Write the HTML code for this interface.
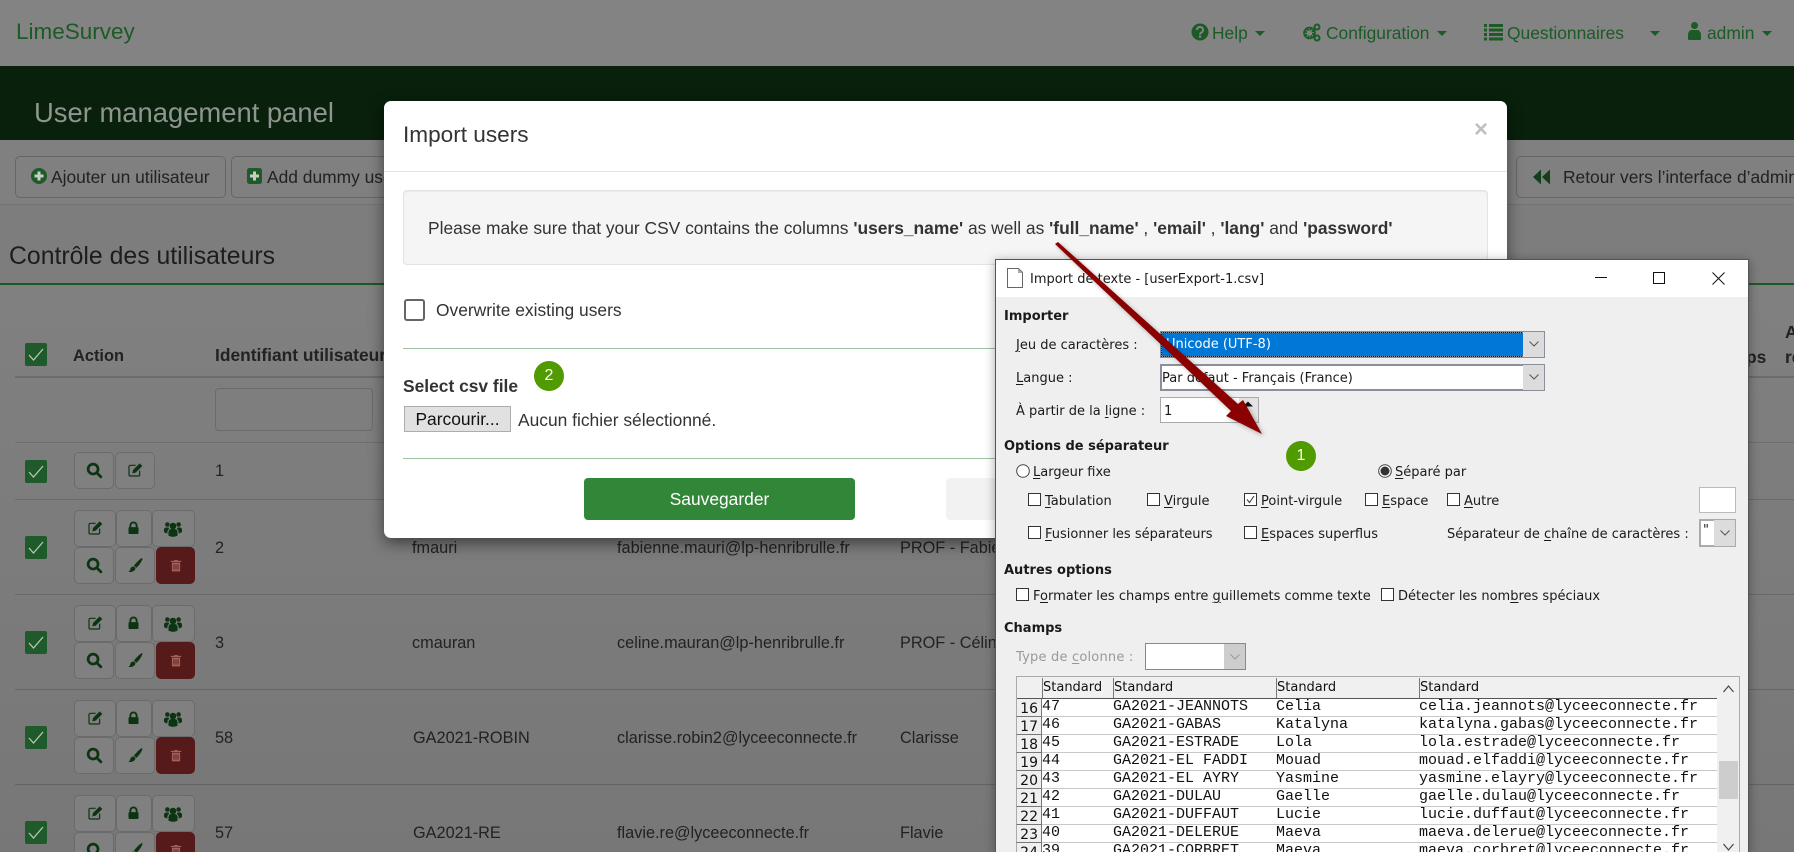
<!DOCTYPE html>
<html><head><meta charset="utf-8"><title>User management panel</title>
<style>
html,body{margin:0;padding:0;width:1794px;height:852px;overflow:hidden;background:#7d7d7d}
body{position:relative;font-family:"Liberation Sans",Arial,sans-serif;font-size:17.400px;color:#222}
.a,.t,svg.i{position:absolute}
.t{white-space:nowrap;line-height:20px;height:20px}
.nav{color:#1c5a26}
.b{font-weight:700}
.tb{position:absolute;box-sizing:border-box;height:42px;top:156px;border:1px solid #666;border-radius:5px}
.ab{position:absolute;box-sizing:border-box;height:37px;border:1px solid #6b6b6b;border-radius:5px;background:#808080}
.ck{position:absolute;width:22px;height:23px;background:#1f5a2a;border-radius:2px}
.ck svg{position:absolute;left:3px;top:4px}
.cell{color:#222;font-size:16.300px}
.d{font-family:"DejaVu Sans",sans-serif;font-size:13px;color:#1a1a1a}
.d .u,.u{text-decoration:underline;text-underline-offset:2px}
.bx{position:absolute;box-sizing:border-box;width:13px;height:13px;border:1px solid #333;background:#fff}
.m{font-family:"Liberation Mono",monospace;font-size:15px;color:#111;line-height:18px;height:18px;position:absolute;white-space:pre}
.rh{position:absolute;left:1016px;width:26px;height:18px;box-sizing:border-box;border-bottom:1px solid #777;border-right:1px solid #777;border-left:1px solid #aaa;background:#efefef;font-family:"DejaVu Sans",sans-serif;font-size:14px;line-height:21px;text-align:right;padding-right:3px;color:#111;overflow:hidden}
.rw{position:absolute;left:1042px;width:675px;height:18px;box-sizing:border-box;border-bottom:1px solid #c8c8c8;background:#fff}
.sd{position:absolute;top:678px;height:20px;font-family:"DejaVu Sans",sans-serif;font-size:13px;line-height:20px;color:#111;box-sizing:border-box;border-left:1px solid #777}
</style></head><body>
<svg width="0" height="0" style="position:absolute">
<defs>
<symbol id="search" viewBox="0 0 24 24"><circle cx="10" cy="10" r="7" fill="none" stroke="currentColor" stroke-width="3.800"/><path d="M15 15l6 6" stroke="currentColor" stroke-width="3.800" stroke-linecap="round"/></symbol>
<symbol id="edit" viewBox="0 0 24 24"><path d="M13 5H5a2 2 0 0 0-2 2v12a2 2 0 0 0 2 2h12a2 2 0 0 0 2-2v-6" fill="none" stroke="currentColor" stroke-width="1.800"/><path d="M9 12L19 2l4 4-10 10-5 1z" fill="currentColor"/></symbol>
<symbol id="lock" viewBox="0 0 24 24"><path d="M7 11V8a5 5 0 0 1 10 0v3" fill="none" stroke="currentColor" stroke-width="3"/><rect x="4" y="10.500" width="16" height="11" rx="1.500" fill="currentColor"/></symbol>
<symbol id="users" viewBox="0 0 24 24"><circle cx="12" cy="8" r="4.400" fill="currentColor"/><circle cx="4.500" cy="6" r="3" fill="currentColor"/><circle cx="19.500" cy="6" r="3" fill="currentColor"/><path d="M6 21v-5a4 4 0 0 1 4-4h4a4 4 0 0 1 4 4v5a14 14 0 0 1-12 0z" fill="currentColor"/><path d="M0 16v-3a3 3 0 0 1 3-3h3l1 2a5 5 0 0 0-2.500 4v2a9 9 0 0 1-4.500-2zM24 16v-3a3 3 0 0 0-3-3h-3l-1 2a5 5 0 0 1 2.500 4v2a9 9 0 0 0 4.500-2z" fill="currentColor"/></symbol>
<symbol id="brush" viewBox="0 0 24 24"><path d="M22 1c1 0 1.500 1 1 2-2 5-5 9-9 12.500L10.500 12C14 8 18 3 22 1z" fill="currentColor"/><path d="M9 13.500c2-.5 4 1.500 3.500 3.500-1 3.500-5.500 5.500-10.500 4.500 2-1 2.500-2.500 3-4.500.5-2 2-3 4-3.500z" fill="currentColor"/></symbol>
<symbol id="trash" viewBox="0 0 24 24"><path d="M9 4V2.500h6V4h6v2H3V4zM5 7h14v15H5z" fill="currentColor"/><path d="M8.500 10v9M12 10v9M15.500 10v9" stroke="#561a1a" stroke-width="1.500"/></symbol>
<symbol id="chk" viewBox="0 0 16 15"><path d="M1 8l4.500 5L15 2" fill="none" stroke="#b8c6ba" stroke-width="1.300"/></symbol>
</defs></svg>

<!-- navbar -->
<div class="a" style="left:0;top:0;width:1794px;height:66px;background:#838383"></div>
<div class="t nav" style="left:16px;top:22px;font-size:22.500px">LimeSurvey</div>
<svg class="i" style="left:1191px;top:22px;color:#1c5a26" width="18" height="20" viewBox="0 0 18 20"><circle cx="9" cy="10" r="8.500" fill="currentColor"/><path d="M6 8a3 3 0 1 1 4.500 2.500c-1 .6-1.500 1-1.500 2" fill="none" stroke="#838383" stroke-width="2"/><rect x="8" y="13.500" width="2.200" height="2.200" fill="#838383"/></svg>
<div class="t nav" style="left:1212px;top:23px">Help</div>
<div class="a" style="left:1255px;top:31px;border:5px solid transparent;border-top-color:#1c5a26;border-bottom:0"></div>
<svg class="i" style="left:1302px;top:22px;color:#1c5a26" width="19" height="20" viewBox="0 0 19 20"><circle cx="7.500" cy="11" r="4.500" fill="none" stroke="currentColor" stroke-width="3.500" stroke-dasharray="2.500 1"/><circle cx="7.500" cy="11" r="5.500" fill="none" stroke="currentColor" stroke-width="1.500"/><circle cx="15" cy="5" r="2.500" fill="none" stroke="currentColor" stroke-width="2"/><circle cx="15" cy="16" r="2.500" fill="none" stroke="currentColor" stroke-width="2"/></svg>
<div class="t nav" style="left:1326px;top:23px">Configuration</div>
<div class="a" style="left:1437px;top:31px;border:5px solid transparent;border-top-color:#1c5a26;border-bottom:0"></div>
<svg class="i" style="left:1484px;top:23px;color:#1c5a26" width="19" height="18" viewBox="0 0 19 18"><path d="M0 1h3v3H0zM5 1h14v3H5zM0 5.500h3v3H0zM5 5.500h14v3H5zM0 10h3v3H0zM5 10h14v3H5zM0 14.500h3v3H0zM5 14.500h14v3H5z" fill="currentColor"/></svg>
<div class="t nav" style="left:1507px;top:23px">Questionnaires</div>
<div class="a" style="left:1650px;top:31px;border:5px solid transparent;border-top-color:#1c5a26;border-bottom:0"></div>
<svg class="i" style="left:1688px;top:22px;color:#1c5a26" width="13" height="18" viewBox="0 0 13 18"><circle cx="6.500" cy="3.500" r="3.500" fill="currentColor"/><path d="M1 18a1 1 0 0 1-1-1v-4c0-3 2-5 3.500-5h6c1.500 0 3.500 2 3.500 5v4a1 1 0 0 1-1 1z" fill="currentColor"/></svg>
<div class="t nav" style="left:1707px;top:23px">admin</div>
<div class="a" style="left:1762px;top:31px;border:5px solid transparent;border-top-color:#1c5a26;border-bottom:0"></div>

<!-- header -->
<div class="a" style="left:0;top:66px;width:1794px;height:74px;background:#08200c"></div>
<div class="t" style="left:34px;top:103px;font-size:27.400px;color:#8f968f">User management panel</div>

<!-- toolbar -->
<div class="a" style="left:0;top:140px;width:1794px;height:64px;background:#808080;border-bottom:1px solid #747474"></div>
<div class="tb" style="left:15px;width:211px"></div>
<div class="tb" style="left:231px;width:180px"></div>
<div class="tb" style="left:1516px;width:290px"></div>
<svg class="i" style="left:31px;top:168px" width="16" height="16" viewBox="0 0 16 16"><circle cx="8" cy="8" r="8" fill="#1f5a28"/><path d="M3.500 6.500h3v-3h3v3h3v3h-3v3h-3v-3h-3z" fill="#c3cfc5"/></svg>
<div class="t" style="left:51px;top:167px">Ajouter un utilisateur</div>
<svg class="i" style="left:247px;top:168px" width="15" height="16" viewBox="0 0 15 16"><rect width="15" height="16" rx="2.500" fill="#1f5a28"/><path d="M3 6.500h3v-3h3v3h3v3H9v3H6v-3H3z" fill="#c3cfc5"/></svg>
<div class="t" style="left:267px;top:167px">Add dummy user</div>
<svg class="i" style="left:1533px;top:169px" width="17" height="16" viewBox="0 0 17 16"><path d="M0 8l8-7.500v15zM9 8l8-7.500v15z" fill="#143f1c"/></svg>
<div class="t" style="left:1563px;top:167px">Retour vers l’interface d’administration</div>

<!-- heading -->
<div class="t" style="left:9px;top:247px;font-size:24.800px;color:#1d1d1d">Contrôle des utilisateurs</div>
<div class="a" style="left:0;top:283px;width:1794px;height:2px;background:#1b5a22"></div>

<!-- table bg -->
<div class="a" style="left:0;top:285px;width:1794px;height:567px;background:linear-gradient(#808080,#777)"></div>
<div class="ck" style="left:25px;top:343px"><svg width="16" height="15"><use href="#chk"/></svg></div>
<div class="t b" style="left:73px;top:346px;font-size:16.400px">Action</div>
<div class="t b" style="left:215px;top:345px">Identifiant utilisateur</div>
<div class="t b" style="left:1746px;top:347px">ps</div>
<div class="t b" style="left:1785px;top:322px">Accès</div>
<div class="t b" style="left:1785px;top:347px">restreint</div>
<div class="a" style="left:15px;top:376px;width:1779px;height:2px;background:#6c6c6c"></div>
<div class="a" style="left:215px;top:388px;width:158px;height:43px;box-sizing:border-box;border:1px solid #6b6b6b;border-radius:4px"></div>
<div class="a" style="left:15px;top:442px;width:1779px;height:1px;background:#6e6e6e"></div>
<div class="a" style="left:15px;top:499px;width:1779px;height:1px;background:#6b6b6b"></div>
<div class="a" style="left:15px;top:594px;width:1779px;height:1px;background:#686868"></div>
<div class="a" style="left:15px;top:689px;width:1779px;height:1px;background:#656565"></div>
<div class="a" style="left:15px;top:784px;width:1779px;height:1px;background:#636363"></div>

<!-- row 1 -->
<div class="ck" style="left:25px;top:460px"><svg width="16" height="15"><use href="#chk"/></svg></div>
<div class="ab" style="left:74px;top:452px;width:40px"></div><svg class="i" style="left:86px;top:462px;color:#0c3412" width="17" height="17"><use href="#search"/></svg>
<div class="ab" style="left:115px;top:452px;width:40px"></div><svg class="i" style="left:127px;top:462px;color:#0c3412" width="16" height="16"><use href="#edit"/></svg>
<div class="t cell" style="left:215px;top:461px">1</div>

<!-- row 2 -->
<div class="ck" style="left:25px;top:536px"><svg width="16" height="15"><use href="#chk"/></svg></div>
<div class="ab" style="left:74px;top:510px;width:42px"></div><svg class="i" style="left:87px;top:520px;color:#0c3412" width="16" height="16"><use href="#edit"/></svg>
<div class="ab" style="left:116px;top:510px;width:36px"></div><svg class="i" style="left:126px;top:520px;color:#0c3412" width="15" height="16"><use href="#lock"/></svg>
<div class="ab" style="left:152px;top:510px;width:43px"></div><svg class="i" style="left:164px;top:520px;color:#0c3412" width="18" height="18"><use href="#users"/></svg>
<div class="ab" style="left:74px;top:547px;width:40px"></div><svg class="i" style="left:86px;top:557px;color:#0c3412" width="17" height="17"><use href="#search"/></svg>
<div class="ab" style="left:115px;top:547px;width:40px"></div><svg class="i" style="left:127px;top:557px;color:#0c3412" width="16" height="17"><use href="#brush"/></svg>
<div class="ab" style="left:156px;top:547px;width:39px;background:#561a1a;border-color:#561a1a"></div><svg class="i" style="left:169px;top:558px;color:#a5605a" width="14" height="15"><use href="#trash"/></svg>
<div class="t cell" style="left:215px;top:538px">2</div>
<div class="t cell" style="left:412px;top:538px">fmauri</div>
<div class="t cell" style="left:617px;top:538px">fabienne.mauri@lp-henribrulle.fr</div>
<div class="t cell" style="left:900px;top:538px">PROF - Fabienne</div>

<!-- row 3 -->
<div class="ck" style="left:25px;top:631px"><svg width="16" height="15"><use href="#chk"/></svg></div>
<div class="ab" style="left:74px;top:605px;width:42px"></div><svg class="i" style="left:87px;top:615px;color:#0c3412" width="16" height="16"><use href="#edit"/></svg>
<div class="ab" style="left:116px;top:605px;width:36px"></div><svg class="i" style="left:126px;top:615px;color:#0c3412" width="15" height="16"><use href="#lock"/></svg>
<div class="ab" style="left:152px;top:605px;width:43px"></div><svg class="i" style="left:164px;top:615px;color:#0c3412" width="18" height="18"><use href="#users"/></svg>
<div class="ab" style="left:74px;top:642px;width:40px"></div><svg class="i" style="left:86px;top:652px;color:#0c3412" width="17" height="17"><use href="#search"/></svg>
<div class="ab" style="left:115px;top:642px;width:40px"></div><svg class="i" style="left:127px;top:652px;color:#0c3412" width="16" height="17"><use href="#brush"/></svg>
<div class="ab" style="left:156px;top:642px;width:39px;background:#561a1a;border-color:#561a1a"></div><svg class="i" style="left:169px;top:653px;color:#a5605a" width="14" height="15"><use href="#trash"/></svg>
<div class="t cell" style="left:215px;top:633px">3</div>
<div class="t cell" style="left:412px;top:633px">cmauran</div>
<div class="t cell" style="left:617px;top:633px">celine.mauran@lp-henribrulle.fr</div>
<div class="t cell" style="left:900px;top:633px">PROF - Céline</div>

<!-- row 4 -->
<div class="ck" style="left:25px;top:726px"><svg width="16" height="15"><use href="#chk"/></svg></div>
<div class="ab" style="left:74px;top:700px;width:42px"></div><svg class="i" style="left:87px;top:710px;color:#0c3412" width="16" height="16"><use href="#edit"/></svg>
<div class="ab" style="left:116px;top:700px;width:36px"></div><svg class="i" style="left:126px;top:710px;color:#0c3412" width="15" height="16"><use href="#lock"/></svg>
<div class="ab" style="left:152px;top:700px;width:43px"></div><svg class="i" style="left:164px;top:710px;color:#0c3412" width="18" height="18"><use href="#users"/></svg>
<div class="ab" style="left:74px;top:737px;width:40px"></div><svg class="i" style="left:86px;top:747px;color:#0c3412" width="17" height="17"><use href="#search"/></svg>
<div class="ab" style="left:115px;top:737px;width:40px"></div><svg class="i" style="left:127px;top:747px;color:#0c3412" width="16" height="17"><use href="#brush"/></svg>
<div class="ab" style="left:156px;top:737px;width:39px;background:#561a1a;border-color:#561a1a"></div><svg class="i" style="left:169px;top:748px;color:#a5605a" width="14" height="15"><use href="#trash"/></svg>
<div class="t cell" style="left:215px;top:728px">58</div>
<div class="t cell" style="left:413px;top:728px">GA2021-ROBIN</div>
<div class="t cell" style="left:617px;top:728px">clarisse.robin2@lyceeconnecte.fr</div>
<div class="t cell" style="left:900px;top:728px">Clarisse</div>

<!-- row 5 -->
<div class="ck" style="left:25px;top:821px"><svg width="16" height="15"><use href="#chk"/></svg></div>
<div class="ab" style="left:74px;top:795px;width:42px"></div><svg class="i" style="left:87px;top:805px;color:#0c3412" width="16" height="16"><use href="#edit"/></svg>
<div class="ab" style="left:116px;top:795px;width:36px"></div><svg class="i" style="left:126px;top:805px;color:#0c3412" width="15" height="16"><use href="#lock"/></svg>
<div class="ab" style="left:152px;top:795px;width:43px"></div><svg class="i" style="left:164px;top:805px;color:#0c3412" width="18" height="18"><use href="#users"/></svg>
<div class="ab" style="left:74px;top:832px;width:40px"></div><svg class="i" style="left:86px;top:842px;color:#0c3412" width="17" height="17"><use href="#search"/></svg>
<div class="ab" style="left:115px;top:832px;width:40px"></div><svg class="i" style="left:127px;top:842px;color:#0c3412" width="16" height="17"><use href="#brush"/></svg>
<div class="ab" style="left:156px;top:832px;width:39px;background:#561a1a;border-color:#561a1a"></div><svg class="i" style="left:169px;top:843px;color:#a5605a" width="14" height="15"><use href="#trash"/></svg>
<div class="t cell" style="left:215px;top:823px">57</div>
<div class="t cell" style="left:413px;top:823px">GA2021-RE</div>
<div class="t cell" style="left:617px;top:823px">flavie.re@lyceeconnecte.fr</div>
<div class="t cell" style="left:900px;top:823px">Flavie</div>

<!-- modal -->
<div class="a" style="left:384px;top:101px;width:1123px;height:437px;background:#fff;border-radius:7px;box-shadow:0 5px 15px rgba(0,0,0,.5)"></div>
<div class="t" style="left:403px;top:125px;font-size:22.600px;color:#333">Import users</div>
<div class="t b" style="left:1474px;top:120px;font-size:24px;color:#c0c0c0">×</div>
<div class="a" style="left:384px;top:171px;width:1123px;height:1px;background:#e5e5e5"></div>
<div class="a" style="left:403px;top:190px;width:1085px;height:75px;box-sizing:border-box;background:#f5f5f5;border:1px solid #e3e3e3;border-radius:4px;box-shadow:inset 0 1px 1px rgba(0,0,0,.05)"></div>
<div class="t" style="left:428px;top:218px;color:#333">Please make sure that your CSV contains the columns <b>'users_name'</b> as well as <b>'full_name'</b> , <b>'email'</b> , <b>'lang'</b> and <b>'password'</b></div>
<div class="a" style="left:404px;top:299px;width:21px;height:22px;box-sizing:border-box;border:2px solid #666;border-radius:3px"></div>
<div class="t" style="left:436px;top:300px;color:#333">Overwrite existing users</div>
<div class="a" style="left:403px;top:348px;width:1085px;height:1px;background:#9fc2a1"></div>
<div class="t b" style="left:403px;top:376px;color:#333">Select csv file</div>
<div class="a" style="left:534px;top:361px;width:30px;height:30px;border-radius:50%;background:#4f9b00;color:#fff;text-align:center;line-height:30px;font-size:16px">2</div>
<div class="a" style="left:404px;top:406px;width:107px;height:26px;box-sizing:border-box;background:#e1e1e1;border:1px solid #adadad;text-align:center;line-height:25px;color:#111">Parcourir...</div>
<div class="t" style="left:518px;top:410px;color:#333">Aucun fichier sélectionné.</div>
<div class="a" style="left:403px;top:458px;width:1085px;height:1px;background:#9fc2a1"></div>
<div class="a" style="left:584px;top:478px;width:271px;height:42px;background:#328637;border-radius:4px;color:#fff;text-align:center;line-height:43px">Sauvegarder</div>
<div class="a" style="left:946px;top:478px;width:271px;height:42px;background:#f2f2f2;border-radius:4px"></div>

<!-- dialog -->
<div class="a" style="left:995px;top:259px;width:754px;height:593px;box-sizing:border-box;background:#efefef;border:1px solid #555;border-bottom:0;box-shadow:0 2px 10px rgba(0,0,0,.35)"></div>
<div class="a" style="left:996px;top:260px;width:752px;height:37px;background:#fff"></div>
<svg class="i" style="left:1007px;top:268px" width="16" height="20" viewBox="0 0 16 20"><path d="M.5.500h11l4 4v15H.5z" fill="#fff" stroke="#666"/><path d="M11 .5l4.500 4.500h-4.500z" fill="#aaa"/></svg>
<div class="t d" style="left:1030px;top:270px">Import de texte - [userExport-1.csv]</div>
<div class="a" style="left:1595px;top:277px;width:12px;height:1px;background:#111"></div>
<div class="a" style="left:1653px;top:272px;width:12px;height:12px;box-sizing:border-box;border:1px solid #111"></div>
<svg class="i" style="left:1712px;top:272px" width="13" height="13"><path d="M.5.500l12 12M12.500.500l-12 12" stroke="#111" fill="none"/></svg>

<div class="t d b" style="left:1004px;top:307px">Importer</div>
<div class="t d" style="left:1016px;top:336px"><span class="u">J</span>eu de caractères :</div>
<div class="a" style="left:1160px;top:331px;width:385px;height:27px;box-sizing:border-box;background:#0078d7;border:2px solid #8a8f9c;outline:1px dotted #111;outline-offset:-2px"></div>
<div class="a" style="left:1523px;top:332px;width:21px;height:25px;background:#dcdcdc"></div>
<div class="t d" style="left:1166px;top:335px;color:#fff">Unicode (UTF-8)</div>
<svg class="i" style="left:1529px;top:341px" width="10" height="6"><path d="M.5.500L5 5 9.500.500" stroke="#555" fill="none"/></svg>
<div class="t d" style="left:1016px;top:369px"><span class="u">L</span>angue :</div>
<div class="a" style="left:1160px;top:364px;width:385px;height:27px;box-sizing:border-box;background:#fff;border:2px solid #8a8f9c"></div>
<div class="a" style="left:1523px;top:365px;width:21px;height:25px;background:#dcdcdc"></div>
<div class="t d" style="left:1162px;top:369px">Par défaut - Français (France)</div>
<svg class="i" style="left:1529px;top:374px" width="10" height="6"><path d="M.5.500L5 5 9.500.500" stroke="#555" fill="none"/></svg>
<div class="t d" style="left:1016px;top:402px">À partir de la <span class="u">l</span>igne :</div>
<div class="a" style="left:1160px;top:397px;width:99px;height:26px;box-sizing:border-box;background:#fff;border:1px solid #aaa"></div>
<div class="a" style="left:1239px;top:398px;width:19px;height:24px;background:#e3e3e3"></div>
<svg class="i" style="left:1243px;top:401px" width="10" height="6"><path d="M0 5.500L5 .5l5 5z" fill="#111"/></svg>
<div class="t d" style="left:1164px;top:402px">1</div>
<div class="t d b" style="left:1004px;top:437px">Options de séparateur</div>
<svg class="i" style="left:1016px;top:464px" width="14" height="14"><circle cx="7" cy="7" r="6.300" fill="#fff" stroke="#444"/></svg>
<div class="t d" style="left:1033px;top:463px"><span class="u">L</span>argeur fixe</div>
<svg class="i" style="left:1378px;top:464px" width="14" height="14"><circle cx="7" cy="7" r="6.300" fill="#fff" stroke="#444"/><circle cx="7" cy="7" r="4.500" fill="#333"/></svg>
<div class="t d" style="left:1395px;top:463px"><span class="u">S</span>éparé par</div>
<div class="bx" style="left:1028px;top:493px"></div><div class="t d" style="left:1045px;top:492px"><span class="u">T</span>abulation</div>
<div class="bx" style="left:1147px;top:493px"></div><div class="t d" style="left:1164px;top:492px"><span class="u">V</span>irgule</div>
<div class="bx" style="left:1244px;top:493px"></div><svg class="i" style="left:1245px;top:494px" width="11" height="11"><path d="M2 5.500l2.500 3L9 2" stroke="#333" fill="none"/></svg><div class="t d" style="left:1261px;top:492px"><span class="u">P</span>oint-virgule</div>
<div class="bx" style="left:1365px;top:493px"></div><div class="t d" style="left:1382px;top:492px"><span class="u">E</span>space</div>
<div class="bx" style="left:1447px;top:493px"></div><div class="t d" style="left:1464px;top:492px"><span class="u">A</span>utre</div>
<div class="a" style="left:1699px;top:487px;width:37px;height:26px;box-sizing:border-box;background:#fff;border:1px solid #bbb"></div>
<div class="bx" style="left:1028px;top:526px"></div><div class="t d" style="left:1045px;top:525px"><span class="u">F</span>usionner les séparateurs</div>
<div class="bx" style="left:1244px;top:526px"></div><div class="t d" style="left:1261px;top:525px"><span class="u">E</span>spaces superflus</div>
<div class="t d" style="left:1447px;top:525px">Séparateur de <span class="u">c</span>haîne de caractères :</div>
<div class="a" style="left:1699px;top:519px;width:37px;height:28px;box-sizing:border-box;background:#fff;border:2px solid #aaa"></div>
<div class="a" style="left:1714px;top:520px;width:21px;height:26px;background:#dcdcdc"></div>
<div class="t d" style="left:1703px;top:521px">"</div>
<svg class="i" style="left:1720px;top:530px" width="10" height="6"><path d="M.5.500L5 5 9.500.500" stroke="#555" fill="none"/></svg>

<div class="t d b" style="left:1004px;top:561px">Autres options</div>
<div class="bx" style="left:1016px;top:588px"></div><div class="t d" style="left:1033px;top:587px">F<span class="u">o</span>rmater les champs entre <span class="u">g</span>uillemets comme texte</div>
<div class="bx" style="left:1381px;top:588px"></div><div class="t d" style="left:1398px;top:587px">Détecter les nom<span class="u">b</span>res spéciaux</div>
<div class="t d b" style="left:1004px;top:619px">Champs</div>
<div class="t d" style="left:1016px;top:648px;color:#999;letter-spacing:.2px">Type de <span class="u">c</span>olonne :</div>
<div class="a" style="left:1145px;top:643px;width:101px;height:27px;box-sizing:border-box;background:#fff;border:1px solid #888"></div>
<div class="a" style="left:1224px;top:644px;width:21px;height:25px;background:#cdcdcd"></div>
<svg class="i" style="left:1230px;top:654px" width="10" height="6"><path d="M.5.500L5 5 9.500.500" stroke="#999" fill="none"/></svg>

<div class="a" style="left:1016px;top:676px;width:724px;height:176px;box-sizing:border-box;background:#f0f0f0;border:1px solid #aaa;border-bottom:0"></div>
<div class="sd" style="left:1042px;width:71px">Standard</div>
<div class="sd" style="left:1113px;width:163px">Standard</div>
<div class="sd" style="left:1276px;width:143px">Standard</div>
<div class="sd" style="left:1419px;width:298px">Standard</div>
<div class="a" style="left:1017px;top:698px;width:700px;height:1px;background:#555"></div>
<svg class="i" style="left:1723px;top:685px" width="11" height="8"><path d="M.5 7L5.500 1l5 6" stroke="#444" fill="none" stroke-width="1.200"/></svg>
<div class="a" style="left:1719px;top:761px;width:19px;height:38px;background:#cdcdcd"></div>
<svg class="i" style="left:1723px;top:843px" width="11" height="8"><path d="M.5 1l5 6 5-6" stroke="#444" fill="none" stroke-width="1.200"/></svg>

<div class="rw" style="top:699px"></div><div class="rh" style="top:699px">16</div>
<div class="rw" style="top:717px"></div><div class="rh" style="top:717px">17</div>
<div class="rw" style="top:735px"></div><div class="rh" style="top:735px">18</div>
<div class="rw" style="top:753px"></div><div class="rh" style="top:753px">19</div>
<div class="rw" style="top:771px"></div><div class="rh" style="top:771px">20</div>
<div class="rw" style="top:789px"></div><div class="rh" style="top:789px">21</div>
<div class="rw" style="top:807px"></div><div class="rh" style="top:807px">22</div>
<div class="rw" style="top:825px"></div><div class="rh" style="top:825px">23</div>
<div class="rw" style="top:843px"></div><div class="rh" style="top:843px">24</div>
<div class="m" style="left:1042px;top:698px">47</div><div class="m" style="left:1113px;top:698px">GA2021-JEANNOTS</div><div class="m" style="left:1276px;top:698px">Celia</div><div class="m" style="left:1419px;top:698px">celia.jeannots@lyceeconnecte.fr</div>
<div class="m" style="left:1042px;top:716px">46</div><div class="m" style="left:1113px;top:716px">GA2021-GABAS</div><div class="m" style="left:1276px;top:716px">Katalyna</div><div class="m" style="left:1419px;top:716px">katalyna.gabas@lyceeconnecte.fr</div>
<div class="m" style="left:1042px;top:734px">45</div><div class="m" style="left:1113px;top:734px">GA2021-ESTRADE</div><div class="m" style="left:1276px;top:734px">Lola</div><div class="m" style="left:1419px;top:734px">lola.estrade@lyceeconnecte.fr</div>
<div class="m" style="left:1042px;top:752px">44</div><div class="m" style="left:1113px;top:752px">GA2021-EL FADDI</div><div class="m" style="left:1276px;top:752px">Mouad</div><div class="m" style="left:1419px;top:752px">mouad.elfaddi@lyceeconnecte.fr</div>
<div class="m" style="left:1042px;top:770px">43</div><div class="m" style="left:1113px;top:770px">GA2021-EL AYRY</div><div class="m" style="left:1276px;top:770px">Yasmine</div><div class="m" style="left:1419px;top:770px">yasmine.elayry@lyceeconnecte.fr</div>
<div class="m" style="left:1042px;top:788px">42</div><div class="m" style="left:1113px;top:788px">GA2021-DULAU</div><div class="m" style="left:1276px;top:788px">Gaelle</div><div class="m" style="left:1419px;top:788px">gaelle.dulau@lyceeconnecte.fr</div>
<div class="m" style="left:1042px;top:806px">41</div><div class="m" style="left:1113px;top:806px">GA2021-DUFFAUT</div><div class="m" style="left:1276px;top:806px">Lucie</div><div class="m" style="left:1419px;top:806px">lucie.duffaut@lyceeconnecte.fr</div>
<div class="m" style="left:1042px;top:824px">40</div><div class="m" style="left:1113px;top:824px">GA2021-DELERUE</div><div class="m" style="left:1276px;top:824px">Maeva</div><div class="m" style="left:1419px;top:824px">maeva.delerue@lyceeconnecte.fr</div>
<div class="m" style="left:1042px;top:842px">39</div><div class="m" style="left:1113px;top:842px">GA2021-CORBRET</div><div class="m" style="left:1276px;top:842px">Maeva</div><div class="m" style="left:1419px;top:842px">maeva.corbret@lyceeconnecte.fr</div>

<!-- circle 1 -->
<div class="a" style="left:1286px;top:441px;width:30px;height:30px;border-radius:50%;background:#4f9b00;color:#fff;text-align:center;line-height:30px;font-size:16px">1</div>

<!-- arrow -->
<svg class="i" style="left:0;top:0;filter:drop-shadow(2px 2px 2px rgba(0,0,0,.3))" width="1794" height="852"><path d="M1055 244L1058 242 1238 404 1243 400 1262 434 1226 416 1231 411z" fill="#8b0000"/></svg>
</body></html>
